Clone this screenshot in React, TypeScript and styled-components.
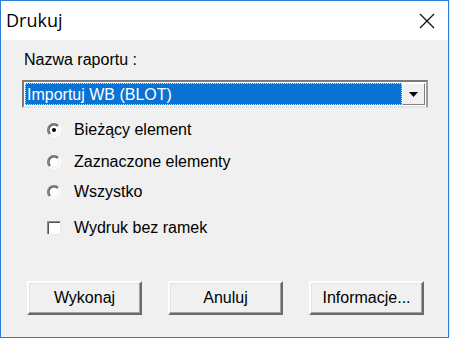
import React from "react";
import styled, { createGlobalStyle } from "styled-components";

const Global = createGlobalStyle`
  html, body { margin: 0; padding: 0; background: #f0f0f0; }
  * { box-sizing: border-box; }
`;

const Window = styled.div`
  width: 449px;
  height: 338px;
  border: 1px solid #2a7fd4;
  display: flex;
  flex-direction: column;
  background: #f0f0f0;
  font-family: "Liberation Sans", Arial, sans-serif;
  color: #000;
`;

const TitleBar = styled.div`
  height: 39px;
  background: #fff;
  display: flex;
  align-items: center;
  justify-content: space-between;
  padding: 0 13px 0 5px;
`;

const Title = styled.span`
  font-family: "Open Sans", "Noto Sans", sans-serif;
  font-size: 18px;
  padding-bottom: 2px;
`;

const Close = styled.svg`
  width: 16px;
  height: 16px;
`;

const Body = styled.div`
  flex: 1;
  padding: 11px 21px 0 21px;
  display: flex;
  flex-direction: column;
`;

const Label = styled.div`
  font-size: 16px;
  height: 18px;
  line-height: 18px;
  padding-left: 2px;
  margin-bottom: 11px;
`;

const Combo = styled.div`
  height: 28px;
  width: 406px;
  display: flex;
  border-top: 2px solid #7a7a7a;
  border-left: 2px solid #7a7a7a;
  border-right: 2px solid #9a9a9a;
  border-bottom: 2px solid #e4e4e4;
  background: #fff;
  padding: 1px;
`;

const Selected = styled.div`
  flex: 1;
  background: #0a72d4;
  color: #fff;
  font-size: 16px;
  line-height: 21px;
  padding-left: 1px;
  border: 1px dotted #cfe0f5;
`;

const DropButton = styled.div`
  width: 23px;
  background: #f0f0f0;
  border-top: 1px solid #fff;
  border-left: 1px solid #fff;
  border-right: 1px solid #808080;
  border-bottom: 1px solid #808080;
  display: flex;
  align-items: center;
  justify-content: center;
`;

const Options = styled.div`
  display: flex;
  flex-direction: column;
  padding-left: 25px;
  margin-top: 13px;
`;

const OptionRow = styled.div<{ $h: number }>`
  display: flex;
  align-items: center;
  height: ${(p) => p.$h}px;
  font-size: 16px;
  gap: 13px;
`;

const Mark = styled.svg`
  width: 14px;
  height: 14px;
  flex: none;
`;

const ButtonRow = styled.div`
  display: flex;
  gap: 26px;
  margin-top: auto;
  margin-bottom: 22px;
  padding-left: 5px;
`;

const Button = styled.div`
  width: 115px;
  height: 34px;
  display: flex;
  align-items: center;
  justify-content: center;
  font-size: 16px;
  background: #f0f0f0;
  border-top: 2px solid #fdfdfd;
  border-left: 2px solid #fdfdfd;
  border-right: 2px solid #6a6a6a;
  border-bottom: 2px solid #6a6a6a;
  box-shadow: inset -1px -1px 0 #a0a0a0, inset 1px 1px 0 #e3e3e3;
`;

const Radio = ({ checked }: { checked?: boolean }) => (
  <Mark viewBox="0 0 14 14">
    <path d="M11.5 2.5 A6 6 0 0 0 2.5 11.5" fill="none" stroke="#7f7f7f" strokeWidth="1.3" />
    <path d="M10.6 3.4 A4.8 4.8 0 0 0 3.4 10.6" fill="none" stroke="#444" strokeWidth="1.1" />
    <path d="M2.5 11.5 A6 6 0 0 0 11.5 2.5" fill="none" stroke="#fff" strokeWidth="1.3" />
    <circle cx="7" cy="7" r="4.2" fill="#fff" />
    {checked && <circle cx="7" cy="7" r="2" fill="#000" />}
  </Mark>
);

const Check = () => (
  <Mark viewBox="0 0 14 14">
    <rect x="0" y="0" width="14" height="14" fill="#fff" />
    <path d="M0.5 14 V0.5 H14" fill="none" stroke="#8a8a8a" strokeWidth="1" />
    <path d="M1.5 13 V1.5 H13" fill="none" stroke="#555" strokeWidth="1" />
    <path d="M0 13.5 H13.5 V0" fill="none" stroke="#e8e8e8" strokeWidth="1" />
  </Mark>
);

export default function App() {
  return (
    <>
      <Global />
      <Window>
        <TitleBar>
          <Title>Drukuj</Title>
          <Close viewBox="0 0 16 16">
            <path d="M1 1 L15 15 M15 1 L1 15" stroke="#111" strokeWidth="1.3" />
          </Close>
        </TitleBar>
        <Body>
          <Label>Nazwa raportu :</Label>
          <Combo>
            <Selected>Importuj WB (BLOT)</Selected>
            <DropButton>
              <svg width="9" height="5" viewBox="0 0 9 5">
                <path d="M0 0 H9 L4.5 5 Z" fill="#000" />
              </svg>
            </DropButton>
          </Combo>
          <Options>
            <OptionRow $h={17}>
              <Radio checked />
              <span>Bieżący element</span>
            </OptionRow>
            <OptionRow $h={17} style={{ marginTop: 15 }}>
              <Radio />
              <span>Zaznaczone elementy</span>
            </OptionRow>
            <OptionRow $h={17} style={{ marginTop: 13 }}>
              <Radio />
              <span>Wszystko</span>
            </OptionRow>
            <OptionRow $h={17} style={{ marginTop: 19 }}>
              <Check />
              <span>Wydruk bez ramek</span>
            </OptionRow>
          </Options>
          <ButtonRow>
            <Button>Wykonaj</Button>
            <Button>Anuluj</Button>
            <Button>Informacje...</Button>
          </ButtonRow>
        </Body>
      </Window>
    </>
  );
}
